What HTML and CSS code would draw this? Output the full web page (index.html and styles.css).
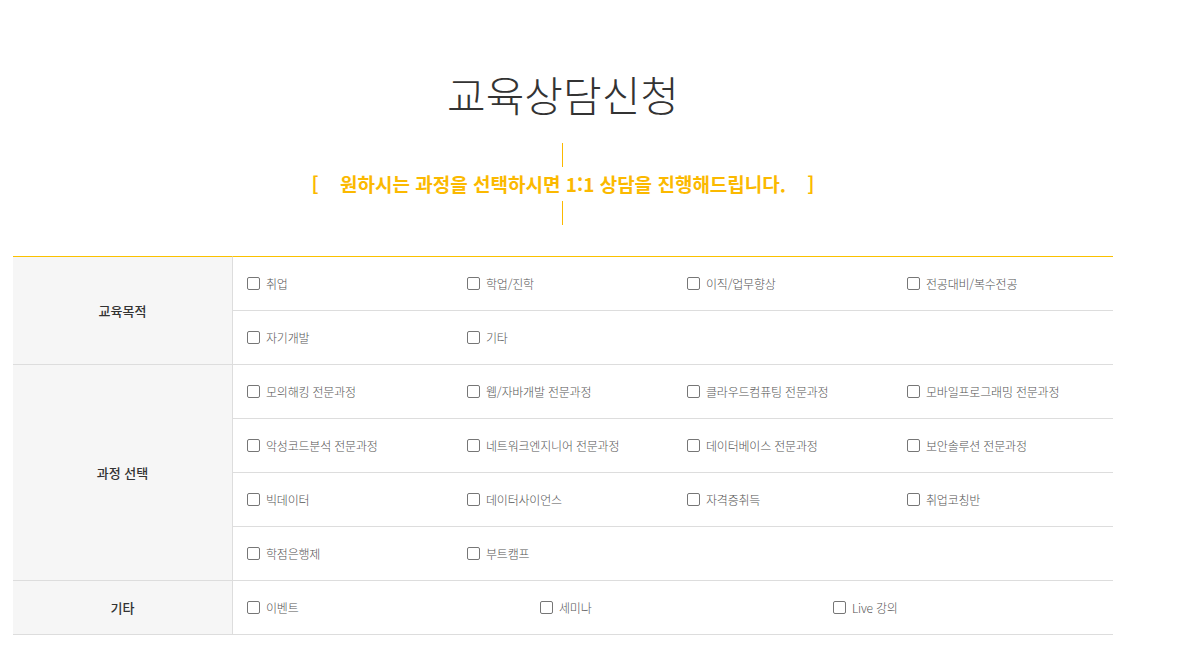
FILE: index.html
```html
<!DOCTYPE html>
<html lang="ko">
<head>
<meta charset="UTF-8" />
<meta name="viewport" content="width=device-width, initial-scale=1" />
<title>교육상담신청</title>
<link rel="stylesheet" href="styles.css">
</head>
<body>

<div class="wrap">
  <!-- Title -->
  <h2 class="pageTitle">교육상담신청</h2>

  <!-- Subtitle with vertical lines -->
  <div class="subBox">
    <span class="vLine"></span>
    <p class="subText">[ &nbsp;&nbsp; 원하시는 과정을 선택하시면 1:1 상담을 진행해드립니다. &nbsp;&nbsp; ]</p>
    <span class="vLine"></span>
  </div>

  <!-- Form table -->
  <table class="formTable">
    <colgroup>
      <col class="colHead">
      <col>
    </colgroup>
    <tr>
      <th rowspan="2">교육목적</th>
      <td>
        <div class="opts four">
          <label><input type="checkbox"> 취업</label>
          <label><input type="checkbox"> 학업/진학</label>
          <label><input type="checkbox"> 이직/업무향상</label>
          <label><input type="checkbox"> 전공대비/복수전공</label>
        </div>
      </td>
    </tr>
    <tr>
      <td>
        <div class="opts four">
          <label><input type="checkbox"> 자기개발</label>
          <label><input type="checkbox"> 기타</label>
        </div>
      </td>
    </tr>
    <tr>
      <th rowspan="4">과정 선택</th>
      <td>
        <div class="opts four">
          <label><input type="checkbox"> 모의해킹 전문과정</label>
          <label><input type="checkbox"> 웹/자바개발 전문과정</label>
          <label><input type="checkbox"> 클라우드컴퓨팅 전문과정</label>
          <label><input type="checkbox"> 모바일프로그래밍 전문과정</label>
        </div>
      </td>
    </tr>
    <tr>
      <td>
        <div class="opts four">
          <label><input type="checkbox"> 악성코드분석 전문과정</label>
          <label><input type="checkbox"> 네트워크엔지니어 전문과정</label>
          <label><input type="checkbox"> 데이터베이스 전문과정</label>
          <label><input type="checkbox"> 보안솔루션 전문과정</label>
        </div>
      </td>
    </tr>
    <tr>
      <td>
        <div class="opts four">
          <label><input type="checkbox"> 빅데이터</label>
          <label><input type="checkbox"> 데이터사이언스</label>
          <label><input type="checkbox"> 자격증취득</label>
          <label><input type="checkbox"> 취업코칭반</label>
        </div>
      </td>
    </tr>
    <tr>
      <td>
        <div class="opts four">
          <label><input type="checkbox"> 학점은행제</label>
          <label><input type="checkbox"> 부트캠프</label>
        </div>
      </td>
    </tr>
    <tr>
      <th>기타</th>
      <td>
        <div class="opts three">
          <label><input type="checkbox"> 이벤트</label>
          <label><input type="checkbox"> 세미나</label>
          <label><input type="checkbox"> Live 강의</label>
        </div>
      </td>
    </tr>
  </table>
</div>

</body>
</html>
```

FILE: styles.css
```css
body {
  margin: 0; background: #fff; color: #333;
  font-family: "Noto Sans CJK KR", "Noto Sans", sans-serif;
}
.wrap {
  width: 1100px;
  margin-left: 13px;
}

/* Title */
.pageTitle {
  margin: 66px 0 0 0;
  text-align: center;
  font-size: 42px;
  font-weight: 300;
  line-height: 56px;
  color: #333;
  letter-spacing: 0;
}

/* Subtitle */
.subBox {
  display: flex;
  flex-direction: column;
  align-items: center;
  margin-top: 21px;
}
.vLine {
  display: block;
  align-self: flex-start;
  margin-left: 549px;
  width: 1px;
  height: 24px;
  background: #fbb900;
}
.subText {
  margin: 0;
  color: #fbb900;
  font-size: 19px;
  font-weight: bold;
  line-height: 34px;
  letter-spacing: 0;
}

/* Table */
.formTable {
  width: 1100px;
  margin-top: 31px;
  table-layout: fixed;
  border-collapse: separate;
  border-spacing: 0;
}
.colHead { width: 220px; }
.formTable tr:first-child th,
.formTable tr:first-child td {
  border-top: 1px solid #fbc100;
}
.formTable th {
  background: #f6f6f6;
  border-right: 1px solid #ddd;
  border-bottom: 1px solid #ddd;
  font-size: 13px;
  font-weight: 500;
  color: #333;
}
.formTable td {
  height: 52px;
  padding: 0 0 1px 14px;
  border-bottom: 1px solid #ddd;
}
.opts {
  display: grid;
  align-items: center;
}
.opts.four { grid-template-columns: repeat(4, 220px); }
.opts.three { grid-template-columns: repeat(3, 293px); }
.opts label {
  display: flex;
  align-items: center;
  gap: 6px;
  font-size: 12px;
  font-weight: 300;
  color: #555;
  letter-spacing: -0.2px;
  white-space: nowrap;
  cursor: pointer;
}
.opts input {
  appearance: none;
  margin: 0;
  width: 13px;
  height: 13px;
  border: 1px solid #767676;
  border-radius: 2px;
  background: #fff;
}
.opts input:checked {
  background: #fbb900;
  border-color: #fbb900;
}
```
